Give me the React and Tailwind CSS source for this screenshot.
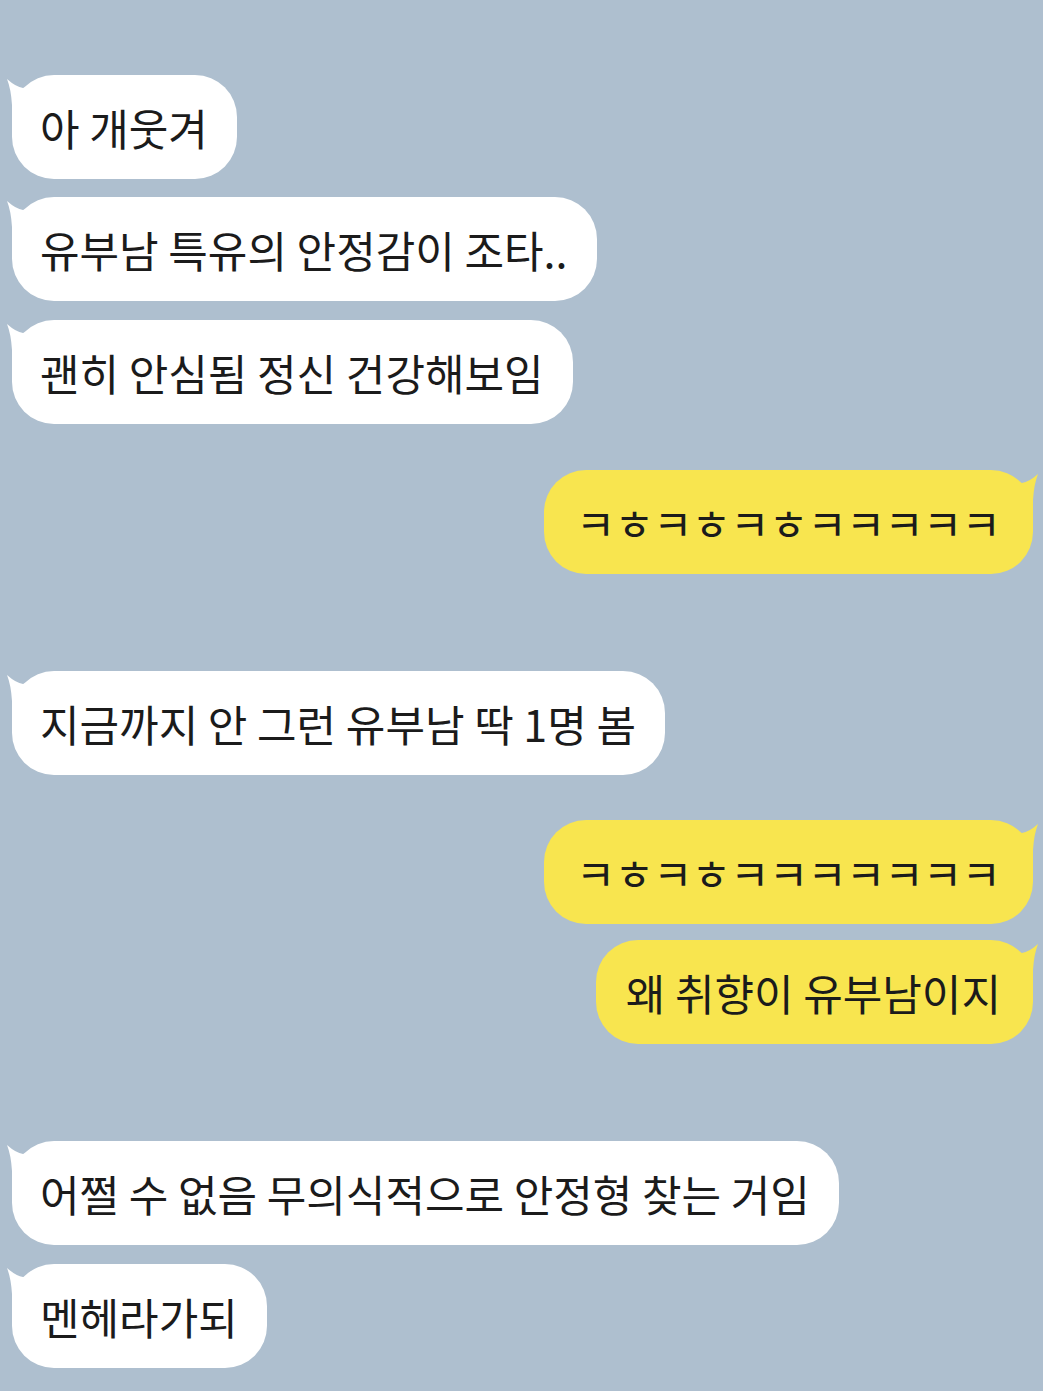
import React from "react";

const messages = [
  { side: "left", text: "아 개웃겨", mt: 75 },
  { side: "left", text: "유부남 특유의 안정감이 조타..", mt: 18 },
  { side: "left", text: "괜히 안심됨 정신 건강해보임", mt: 19 },
  { side: "right", text: "ㅋㅎㅋㅎㅋㅎㅋㅋㅋㅋㅋ", mt: 46, jamo: true },
  { side: "left", text: "지금까지 안 그런 유부남 딱 1명 봄", mt: 97 },
  { side: "right", text: "ㅋㅎㅋㅎㅋㅋㅋㅋㅋㅋㅋ", mt: 45, jamo: true },
  { side: "right", text: "왜 취향이 유부남이지", mt: 16 },
  { side: "left", text: "어쩔 수 없음 무의식적으로 안정형 찾는 거임", mt: 97 },
  { side: "left", text: "멘헤라가되", mt: 19 },
];

function Tail({ side, color }) {
  // pointed tail poking out of the top corner of a bubble
  if (side === "left") {
    return (
      <svg className="absolute -left-[6px] top-0" width="40" height="44" viewBox="0 0 40 44">
        <path d="M1 4 Q 10 12 17 13 Q 26 12 36 6 L 36 44 L 6 44 L 6 30 Q 5 14 1 4 Z" fill={color} />
      </svg>
    );
  }
  return (
    <svg className="absolute -right-[6px] top-0" width="40" height="44" viewBox="0 0 40 44">
      <path d="M39 4 Q 30 12 23 13 Q 14 12 4 6 L 4 44 L 34 44 L 34 30 Q 35 14 39 4 Z" fill={color} />
    </svg>
  );
}

function Bubble({ msg }) {
  const isLeft = msg.side === "left";
  const color = isLeft ? "#ffffff" : "#f8e54f";
  let pad = "pl-[28px] pr-[29px]";
  if (!isLeft) pad = msg.jamo ? "pl-[32px] pr-[33px]" : "pl-[30px] pr-[32px]";
  return (
    <div
      className={`flex ${isLeft ? "justify-start pl-[12px]" : "justify-end pr-[10px]"}`}
      style={{ marginTop: msg.mt }}
    >
      <div className="relative">
        <Tail side={msg.side} color={color} />
        <div
          className={`relative h-[104px] flex items-center rounded-[42px] text-[#1b1b1b] ${
            isLeft ? "bg-white" : "bg-[#f8e54f]"
          } ${pad} ${msg.jamo ? "text-[43px] tracking-[-1px]" : "text-[43px]"}`}
        >
          {msg.text}
        </div>
      </div>
    </div>
  );
}

export default function App() {
  return (
    <div
      className="w-[1043px] h-[1391px] bg-[#aebfcf] overflow-hidden"
      style={{ fontFamily: '"Noto Sans CJK KR", "Noto Sans", sans-serif' }}
    >
      {messages.map((m, i) => (
        <Bubble key={i} msg={m} />
      ))}
    </div>
  );
}
